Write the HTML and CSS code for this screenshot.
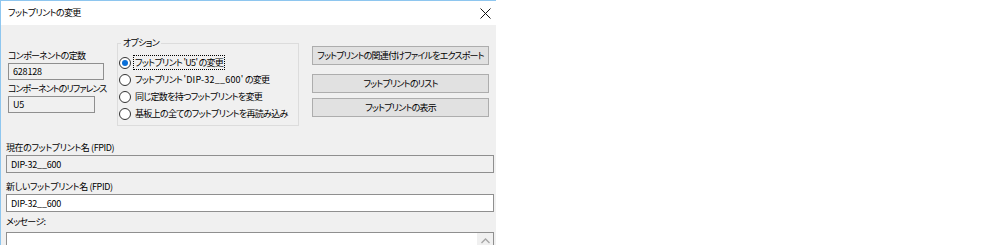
FILE: index.html
```html
<!DOCTYPE html>
<html lang="ja">
<head>
  <meta charset="UTF-8" />
  <title>フットプリントの変更</title>
  <link rel="stylesheet" href="styles.css">
</head>
<body>
  <!-- ======= DIALOG ======= -->
  <div class="dialog">
    <div class="titlebar">
      <span class="title">フットプリントの変更</span>
      <svg class="close" width="11" height="11" viewBox="0 0 11 11">
        <path d="M0.5 0.5 L10.5 10.5 M10.5 0.5 L0.5 10.5" stroke="#111" stroke-width="1" fill="none" />
      </svg>
    </div>

    <div class="content">
      <div class="top">
        <!-- component info -->
        <div class="comp">
          <label class="lbl">コンポーネントの定数</label>
          <input class="field ro w-value" type="text" value="628128" readonly />
          <label class="lbl lbl-2">コンポーネントのリファレンス</label>
          <input class="field ro w-ref" type="text" value="U5" readonly />
        </div>

        <!-- options group -->
        <div class="group">
          <div class="legend">オプション</div>
          <div class="radios">
            <div class="opt"><span class="radio checked"></span><span class="txt focus">フットプリント 'U5' の変更</span></div>
            <div class="opt"><span class="radio"></span><span class="txt">フットプリント <span class="latin">'DIP-32__600'</span> の変更</span></div>
            <div class="opt"><span class="radio"></span><span class="txt">同じ定数を持つフットプリントを変更</span></div>
            <div class="opt"><span class="radio"></span><span class="txt">基板上の全てのフットプリントを再読み込み</span></div>
          </div>
        </div>

        <!-- actions -->
        <div class="actions">
          <button class="btn btn-export">フットプリントの関連付けファイルをエクスポート</button>
          <button class="btn btn-list">フットプリントのリスト</button>
          <button class="btn btn-show">フットプリントの表示</button>
        </div>
      </div>

      <div class="lower">
        <label class="lbl lbl-cur">現在のフットプリント名 (FPID)</label>
        <input class="field ro wide" type="text" value="DIP-32__600" readonly />

        <label class="lbl lbl-new">新しいフットプリント名 (FPID)</label>
        <input class="field wide new" type="text" value="DIP-32__600" />

        <label class="lbl lbl-msg">メッセージ:</label>
        <div class="messages">
          <div class="scroll">
            <svg width="9" height="6" viewBox="0 0 9 6">
              <path d="M0.5 5 L4.5 1 L8.5 5" stroke="#a6a6a6" stroke-width="1.3" fill="none" />
            </svg>
          </div>
        </div>
      </div>
    </div>
  </div>
</body>
</html>
```

FILE: styles.css
```css
/* ======= RESET ======= */
*,*::before,*::after{box-sizing:border-box;margin:0;padding:0}

body {
  background: #fff;
  font-family: "Noto Sans CJK JP", "Noto Sans", sans-serif;
  font-size: 9px;
  letter-spacing: -0.7px;
  color: #000;
  font-feature-settings: "palt";
}

/* ======= WINDOW ======= */
.dialog{width:496px;height:245px;border-top:1px solid #8ec6ef;border-left:1px solid #8ec6ef;background:#f0f0f0;overflow:hidden}
.titlebar{height:24px;background:#fff;display:flex;align-items:center;justify-content:space-between;padding:0 5px 0 7px}
.title{line-height:16px;letter-spacing:-0.6px}
.close{display:block;margin-top:1px}

.content{padding:0 2px 0 7px}

/* ======= TOP ROW ======= */
.top{display:grid;grid-template-columns:96px 182px 177px;column-gap:13px;height:115px}

.lbl{display:block;line-height:15px;white-space:nowrap}
.comp{padding-top:23px}
.lbl-2{margin-top:1px;letter-spacing:-1px}

.field{display:block;height:17px;border:1px solid #8f8f8f;background:#fff;font:inherit;letter-spacing:-0.2px;font-feature-settings:"palt";color:#000;padding:0 4px;outline:none;line-height:15px}
.field.ro{background:#f0f0f0}
.w-value{width:96px}
.w-ref{width:87px}

/* Group box */
.group{margin-top:18px;height:83px;border:1px solid #dcdcdc}
.legend{width:fit-content;margin:-9px 0 0 3px;padding:0 2px;background:#f0f0f0;line-height:16px}
.radios{margin-top:3px}
.opt{display:flex;align-items:center;height:17px;padding-left:1px;white-space:nowrap}
.radio{width:12px;height:12px;border:1px solid #333;border-radius:50%;background:#fff;display:flex;align-items:center;justify-content:center;flex-shrink:0}
.radio.checked::after{content:"";width:6px;height:6px;border-radius:50%;background:#0a6fd8}
.txt{margin-left:2px;line-height:13px;padding:0 1px;border:1px solid transparent}
.txt.focus{border:1px dotted #000}
.latin{letter-spacing:0.2px}

/* Buttons */
.actions{display:flex;flex-direction:column}
.btn{height:19px;width:100%;border:1px solid #adadad;background:#e1e1e1;font:inherit;letter-spacing:-0.8px;font-feature-settings:"palt";color:#000;line-height:16px;white-space:nowrap}
.btn-export{margin-top:21px}
.btn-list{margin-top:9px}
.btn-show{margin-top:5px}

/* ======= LOWER FIELDS ======= */
.lower{margin-left:-2px}
.lbl-cur{margin-top:1px;line-height:14px;letter-spacing:-0.4px}
.wide{width:488px;height:18px;padding:0 4px}
.lbl-new{margin-top:7px;line-height:14px;letter-spacing:-0.4px}
.lbl-msg{margin-top:3px;line-height:14px}

.messages{margin-top:3px;width:488px;height:40px;border:1px solid #8f8f8f;background:#fff;display:flex;justify-content:flex-end}
.scroll{width:16px;background:#f0f0f0;display:flex;justify-content:center;padding-top:5px}
.scroll svg{display:block}
```
